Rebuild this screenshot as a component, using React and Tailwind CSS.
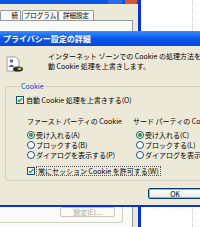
import React from 'react'

function Radio({ checked }) {
  return (
    <span className="flex h-[8px] w-[8px] shrink-0 items-center justify-center rounded-full border border-[#1C5180] bg-white">
      {checked && <span className="h-[4px] w-[4px] rounded-full bg-[#21A121]"></span>}
    </span>
  )
}

function Check() {
  return (
    <span className="flex h-[8px] w-[8px] shrink-0 items-center justify-center border border-[#1C5180] bg-white">
      <svg width="6" height="6" viewBox="0 0 6 6">
        <path d="M0.8 3 L2.3 4.5 L5.2 1.2" fill="none" stroke="#21A121" strokeWidth="1.4" />
      </svg>
    </span>
  )
}

function PrivacyIcon() {
  return (
    <svg width="20" height="17" viewBox="0 0 20 17">
      <path d="M2 1 H11 L14 4 V15 H2 Z" fill="#fff" stroke="#8a8a8a" strokeWidth="0.8" />
      <circle cx="6.5" cy="5" r="1.8" fill="#6a5acd" />
      <path d="M3.5 11 Q6.5 6.5 9.5 11 Z" fill="#5b4fc4" />
      <ellipse cx="13" cy="13" rx="5" ry="2.6" fill="#2a2a2a" />
      <ellipse cx="14.5" cy="12.8" rx="2" ry="1.3" fill="#d8b24a" />
    </svg>
  )
}

function RadioRow({ checked, label }) {
  return (
    <div className="flex h-[10px] items-center gap-[1px]">
      <Radio checked={checked} />
      <span>{label}</span>
    </div>
  )
}

export default function App() {
  return (
    <div className="relative h-[227px] w-[200px] overflow-hidden bg-white font-['Noto_Sans_CJK_JP',sans-serif] text-[7px] leading-[10px] text-black">
      {/* Internet Options window behind */}
      <div className="flex h-full">
        <div className="flex w-[138px] flex-col bg-[#ECE9D8]">
          <div className="flex h-[4px] justify-end gap-[3px] bg-[#0A56E3] pr-[1px]">
            <span className="h-[4px] w-[14px] rounded-b-[2px] bg-[#2D6CF0]"></span>
            <span className="h-[4px] w-[12px] rounded-b-[2px] bg-[#D9553A]"></span>
          </div>
          <div className="mt-[6px] flex h-[10px] items-end text-[6.5px] leading-[9px]">
            <div className="flex h-[10px] w-[21px] justify-end rounded-t-[2px] border border-b-0 border-[#919B9C] bg-[#F8F8F4] pr-[2px]">続</div>
            <div className="ml-[1px] flex h-[10px] w-[36px] justify-center rounded-t-[2px] border border-b-0 border-[#919B9C] bg-[#F8F8F4]">プログラム</div>
            <div className="flex h-[10px] w-[36px] justify-center rounded-t-[2px] border border-b-0 border-[#919B9C] bg-[#F8F8F4]">詳細設定</div>
          </div>
          <div className="flex w-[133px] flex-1 flex-col border-r border-t border-[#919B9C] bg-[#FAFAF7]">
            <div className="mt-[186px] flex h-[16px] w-[123px] items-start rounded-br-[3px] border-b border-r border-[#D0D0BF]">
              <div className="ml-[60px] flex h-[10px] w-[55px] items-center justify-center rounded-[2px] border border-[#C9C7BA] text-[#A8A79A]">設定(E)...</div>
            </div>
          </div>
        </div>
        <div className="w-[3px] bg-[#0831D9]"></div>
        <div className="flex-1">
          <div className="ml-[51px] h-full w-0 border-l border-dotted border-[#C8C8C8]"></div>
        </div>
      </div>

      {/* Privacy dialog */}
      <div className="absolute left-0 top-[31px] flex h-[176px] w-[230px] flex-col">
        <div className="flex h-[15px] items-center bg-gradient-to-b from-[#3A8CFF] via-[#0757E8] to-[#0449D6] pl-[3px] text-[8px] font-bold text-white">
          プライバシー設定の詳細
        </div>
        <div className="flex h-[159px] flex-col bg-[#ECE9D8]">
          <div className="mt-[5px] flex">
            <div className="ml-[5px] mt-[5px]">
              <PrivacyIcon />
            </div>
            <div className="ml-[23px] whitespace-nowrap">
              <div>インターネット ゾーンでの Cookie の処理方法を選択してください。自</div>
              <div>動 Cookie 処理を上書きします。</div>
            </div>
          </div>
          <fieldset className="ml-[5px] mr-[5px] mt-[8px] rounded-[3px] border border-[#D0D0BF] pb-[4px] pl-[10px]">
            <legend className="ml-[4px] px-[1px] text-[#0046D5]">Cookie</legend>
            <div className="mt-[4px] flex h-[10px] items-center gap-[2px]">
              <Check />
              <span>自動 Cookie 処理を上書きする(O)</span>
            </div>
            <div className="mt-[11px] flex">
              <div className="ml-[11px] flex w-[106px] flex-col">
                <div className="h-[10px]">ファースト パーティの Cookie</div>
                <div className="mt-[4px]">
                  <RadioRow checked label="受け入れる(A)" />
                  <RadioRow label="ブロックする(B)" />
                  <RadioRow label="ダイアログを表示する(P)" />
                </div>
              </div>
              <div className="flex flex-col whitespace-nowrap">
                <div className="h-[10px]">サード パーティの Cookie</div>
                <div className="mt-[4px] pl-[3px]">
                  <RadioRow checked label="受け入れる(C)" />
                  <RadioRow label="ブロックする(L)" />
                  <RadioRow label="ダイアログを表示する(M)" />
                </div>
              </div>
            </div>
            <div className="ml-[11px] mt-[6px] flex h-[10px] items-center gap-[1px]">
              <Check />
              <span className="border border-dotted border-[#555] px-[1px] leading-[8px]">常にセッション Cookie を許可する(W)</span>
            </div>
          </fieldset>
          <div className="ml-[148px] mt-[7px] flex h-[11px] w-[54px] items-center justify-center rounded-[2px] border border-[#003C74] bg-gradient-to-b from-white to-[#ECEBE6] shadow-[inset_0_0_0_1px_#8FB3EE]">
            OK
          </div>
        </div>
        <div className="h-[2px] bg-[#0831D9]"></div>
      </div>
    </div>
  )
}
